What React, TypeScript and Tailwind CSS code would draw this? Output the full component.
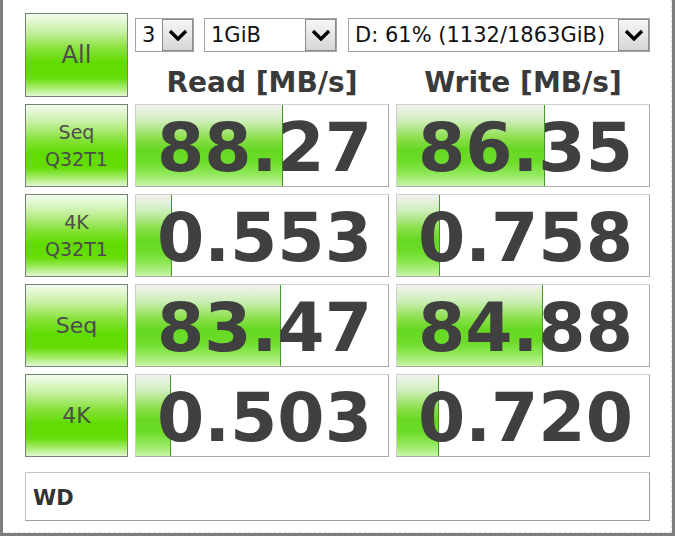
const rows = [
  { label: ["Seq", "Q32T1"], read: "88.27", readBar: 147, write: "86.35", writeBar: 148 },
  { label: ["4K", "Q32T1"], read: "0.553", readBar: 36, write: "0.758", writeBar: 43 },
  { label: ["Seq"], read: "83.47", readBar: 145, write: "84.88", writeBar: 146 },
  { label: ["4K"], read: "0.503", readBar: 35, write: "0.720", writeBar: 42 },
];

const GreenButton = ({ lines, big }: { lines: string[]; big?: boolean }) => {
  const size = big ? "text-[24px]" : lines.length > 1 ? "text-[19px] leading-[27px]" : "text-[22px]";
  return (
    <div
      className={`flex flex-col items-center justify-center border border-[#72846f] bg-[linear-gradient(to_bottom,#f4fbf0_0%,#c6f0a0_22%,#88e23c_42%,#60dc00_60%,#66dd08_78%,#a6ec6c_90%,#e2f8d2_100%)] font-['DejaVu_Sans'] text-[#4c4c4c] ${size}`}
    >
      {lines.map((l) => (
        <span key={l}>{l}</span>
      ))}
    </div>
  );
};

const Chevron = () => (
  <svg width="20" height="12" viewBox="0 0 20 12">
    <polyline points="2,2 10,10 18,2" fill="none" stroke="#000" strokeWidth="3.4" strokeLinejoin="miter" />
  </svg>
);

const Combo = ({ text, className }: { text: string; className: string }) => (
  <div className={`flex h-[34px] items-stretch border border-[#a3a3a3] bg-white ${className}`}>
    <span className="flex-1 self-center pl-[6px] font-['DejaVu_Sans'] text-[21px] leading-none text-[#111]">{text}</span>
    <div className="flex w-[31px] items-center justify-center border border-[#8c8c8c] bg-[linear-gradient(to_bottom,#f6f6f6,#d6d6d6)]">
      <Chevron />
    </div>
  </div>
);

const Cell = ({ value, bar }: { value: string; bar: number }) => (
  <div className="relative flex items-center justify-end overflow-hidden border border-[#cfcfcf] border-b-[#a9a9a9] border-r-[#a9a9a9] bg-white pr-[16px]">
    <div
      className="absolute inset-y-0 left-0 border-r border-[#3f9a1f] bg-[linear-gradient(to_bottom,#f2f2f0_0%,#cdeeb8_20%,#8ee050_40%,#66d822_55%,#6cdc28_70%,#90e85a_85%,#c8f5a8_100%)]"
      style={{ width: bar }}
    />
    <span className="relative pt-[5px] font-['DejaVu_Sans'] text-[68px] font-bold leading-none text-[#404040]">
      {value}
    </span>
  </div>
);

export default function App() {
  return (
    <div className="h-[536px] w-[675px] border-b-[3px] border-l-[3px] border-r-[3px] border-[#7d7d7d] bg-white">
      <div className="h-full border-b border-r border-dashed border-[#e2e2e2] pl-[22px] pt-[13px]">
        <div className="grid grid-cols-[103px_254px_254px] grid-rows-[84px_83px_83px_83px_83px] gap-x-[7px] gap-y-[7px]">
          <GreenButton lines={["All"]} big />
          <div className="col-span-2 flex flex-col pt-[5px]">
            <div className="flex">
              <Combo text="3" className="w-[59px]" />
              <Combo text="1GiB" className="ml-[10px] w-[133px]" />
              <Combo text="D: 61% (1132/1863GiB)" className="ml-[11px] flex-1" />
            </div>
            <div className="mt-[15px] grid grid-cols-[254px_254px] gap-x-[7px] font-['DejaVu_Sans'] text-[28px] font-bold leading-[32px] text-[#3a3a3a]">
              <div className="text-center">Read [MB/s]</div>
              <div className="text-center">Write [MB/s]</div>
            </div>
          </div>
          {rows.map((r) => (
            <div key={r.read} className="contents">
              <GreenButton lines={r.label} />
              <Cell value={r.read} bar={r.readBar} />
              <Cell value={r.write} bar={r.writeBar} />
            </div>
          ))}
        </div>
        <div className="mt-[15px] flex h-[49px] w-[625px] items-center border border-[#c4c4c4] border-b-[#9c9c9c] border-r-[#9c9c9c] bg-white pl-[7px] pt-[4px] font-['DejaVu_Sans'] text-[21px] font-bold text-[#333]">
          WD
        </div>
      </div>
    </div>
  );
}
